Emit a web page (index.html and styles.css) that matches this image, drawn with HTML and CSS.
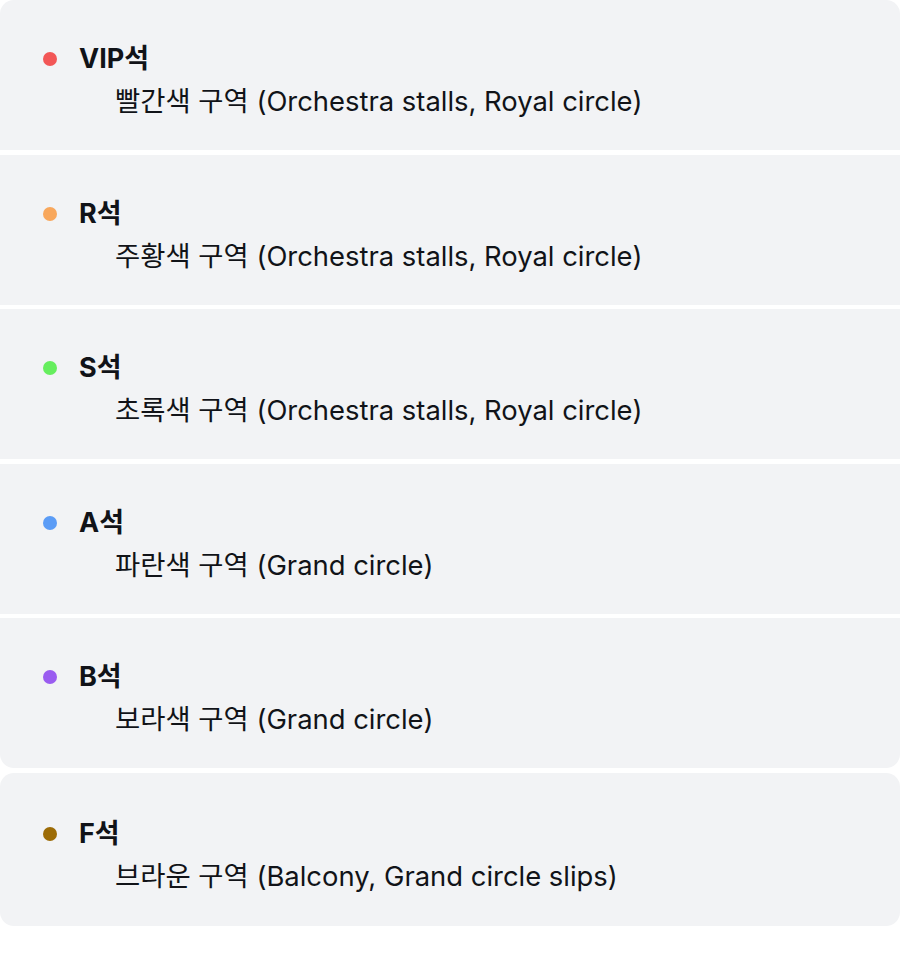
FILE: index.html
```html
<!DOCTYPE html>
<html lang="ko">
<head>
<meta charset="utf-8">
<title>좌석 구역</title>
<link rel="stylesheet" href="styles.css">
</head>
<body>
<div class="legend">
  <ul class="group">
    <li class="item">
      <div class="title"><span class="dot dot-red"></span><span class="name">VIP석</span></div>
      <div class="desc">빨간색 구역 (Orchestra stalls, Royal circle)</div>
    </li>
    <li class="item">
      <div class="title"><span class="dot dot-orange"></span><span class="name">R석</span></div>
      <div class="desc">주황색 구역 (Orchestra stalls, Royal circle)</div>
    </li>
    <li class="item">
      <div class="title"><span class="dot dot-green"></span><span class="name">S석</span></div>
      <div class="desc">초록색 구역 (Orchestra stalls, Royal circle)</div>
    </li>
    <li class="item">
      <div class="title"><span class="dot dot-blue"></span><span class="name">A석</span></div>
      <div class="desc">파란색 구역 (Grand circle)</div>
    </li>
    <li class="item">
      <div class="title"><span class="dot dot-purple"></span><span class="name">B석</span></div>
      <div class="desc">보라색 구역 (Grand circle)</div>
    </li>
  </ul>
  <ul class="group group-single">
    <li class="item">
      <div class="title"><span class="dot dot-brown"></span><span class="name">F석</span></div>
      <div class="desc">브라운 구역 (Balcony, Grand circle slips)</div>
    </li>
  </ul>
</div>
</body>
</html>
```

FILE: styles.css
```css
html, body {
  margin: 0;
  padding: 0;
  background: #ffffff;
}

body {
  font-family: "Inter", "Noto Sans CJK KR", sans-serif;
  color: #111318;
  width: 900px;
}

.legend {
  display: flex;
  flex-direction: column;
  gap: 5px;
}

.group {
  list-style: none;
  margin: 0;
  padding: 0;
  display: flex;
  flex-direction: column;
  gap: 4.5px;
}

.item {
  background: #f2f3f5;
  height: 150px;
  box-sizing: border-box;
  padding: 41px 0 0 43px;
  display: flex;
  flex-direction: column;
  gap: 6px;
}

.group-single .item {
  height: 153px;
  padding-top: 43px;
}

.item:first-child {
  border-top-left-radius: 14px;
  border-top-right-radius: 14px;
}

.item:last-child {
  border-bottom-left-radius: 14px;
  border-bottom-right-radius: 14px;
}

.title {
  display: flex;
  align-items: center;
  gap: 22px;
  height: 36px;
}

.dot {
  width: 14px;
  height: 14px;
  border-radius: 50%;
  flex: none;
}

.dot-red { background: #f25656; }
.dot-orange { background: #f8a75c; }
.dot-green { background: #66ee5e; }
.dot-blue { background: #5b9cf6; }
.dot-purple { background: #9a5cf0; }
.dot-brown { background: #9c6b06; }

.name {
  font-size: 27px;
  font-weight: 700;
  line-height: 36px;
}

.desc {
  font-size: 27.4px;
  line-height: 36px;
  padding-left: 72px;
}
```
